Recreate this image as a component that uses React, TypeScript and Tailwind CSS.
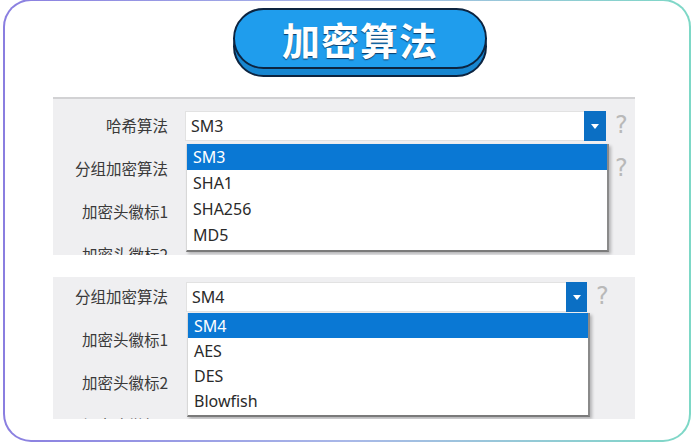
import React from "react";

const cjk = { fontFamily: '"Noto Sans CJK SC", "Noto Sans", sans-serif' };
const latin = { fontFamily: '"Noto Sans", "Open Sans", sans-serif' };

function Caret() {
  return (
    <svg width="8" height="5" viewBox="0 0 8 5">
      <path d="M0 0 L8 0 L4 5 Z" fill="#ffffff" />
    </svg>
  );
}

function Help() {
  return (
    <span
      className="text-[24px] leading-none text-[#b9b9b9]"
      style={{ fontFamily: '"DejaVu Sans", sans-serif' }}
    >
      ?
    </span>
  );
}

function Label({ children }: { children: React.ReactNode }) {
  return (
    <div className="w-[115px] shrink-0 text-right text-[15.5px] text-[#3a3a3a] leading-none" style={cjk}>
      {children}
    </div>
  );
}

function DropList({
  items,
  widthClass,
  rowClass,
  topClass,
}: {
  items: string[];
  widthClass: string;
  rowClass: string;
  topClass: string;
}) {
  return (
    <div
      className={`absolute left-0 ${topClass} ${widthClass} z-10 bg-white border-l border-[#d8d8d8] border-r-2 border-b-2 border-r-[#8a8a8a] border-b-[#7a7a7a] pb-[2px] shadow-[2px_2px_3px_rgba(0,0,0,0.25)]`}
      style={latin}
    >
      {items.map((it, i) => (
        <div
          key={it}
          className={`${rowClass} flex items-center pl-[6px] text-[16px] ${
            i === 0 ? "bg-[#0a78d4] text-white" : "text-[#2a2a2a]"
          }`}
        >
          {it}
        </div>
      ))}
    </div>
  );
}

export default function App() {
  return (
    <div className="w-[696px] h-[446px] bg-white overflow-hidden">
      <div className="ml-[3px] -mt-[1px] w-[688px] h-[443px] rounded-[28px] p-[2px] bg-gradient-to-r from-[#8a7ee0] via-[#a9b8e8] to-[#7dd8c6]">
        <div className="w-full h-full rounded-[26px] bg-white flex flex-col">
          {/* Title pill */}
          <div className="relative ml-[228px] mt-[7px] w-[254px] h-[69px] shrink-0">
            <div className="absolute left-0 top-[8px] w-[254px] h-[61px] rounded-full bg-[#1786d0] border-[2.5px] border-[#0c2440]" />
            <div className="absolute left-0 top-0 w-[254px] h-[61px] rounded-full bg-[#1f9ded] border-[2.5px] border-[#0c2440] flex items-center justify-center">
              <span
                className="text-white text-[38px] font-bold tracking-[1px] leading-none [text-shadow:0_1px_1px_#0b3a66]"
                style={cjk}
              >
                加密算法
              </span>
            </div>
          </div>

          {/* Panel 1 */}
          <div className="ml-[48px] mt-[20px] w-[582px] h-[158px] shrink-0 bg-[#efeff1] border-t-2 border-[#d2d2d4] overflow-hidden pt-[12px] flex flex-col gap-[13px]">
            <div className="flex items-center h-[30px] shrink-0">
              <Label>哈希算法</Label>
              <div className="relative ml-[17px] w-[421px] h-[30px] bg-white border border-[#e2e2e2] flex items-center">
                <span className="pl-[5px] text-[16px] text-[#2a2a2a] flex-1" style={latin}>
                  SM3
                </span>
                <div className="w-[22px] h-[30px] bg-[#0b6fc4] flex items-center justify-center -mr-px">
                  <Caret />
                </div>
                <DropList
                  items={["SM3", "SHA1", "SHA256", "MD5"]}
                  widthClass="w-[423px]"
                  rowClass="h-[26px]"
                  topClass="top-[32px]"
                />
              </div>
              <div className="ml-[9px]">
                <Help />
              </div>
            </div>
            <div className="flex items-center h-[30px] shrink-0">
              <Label>分组加密算法</Label>
              <div className="ml-[17px] w-[421px] h-[30px]" />
              <div className="ml-[9px]">
                <Help />
              </div>
            </div>
            <div className="flex items-center h-[30px] shrink-0">
              <Label>加密头徽标1</Label>
            </div>
            <div className="flex items-center h-[30px] shrink-0">
              <Label>加密头徽标2</Label>
            </div>
          </div>

          {/* Panel 2 */}
          <div className="ml-[48px] mt-[22px] w-[582px] h-[142px] shrink-0 bg-[#efeff1] overflow-hidden pt-[5px] flex flex-col gap-[13px]">
            <div className="flex items-center h-[30px] shrink-0">
              <Label>分组加密算法</Label>
              <div className="relative ml-[18px] w-[401px] h-[30px] bg-white border border-[#e2e2e2] flex items-center">
                <span className="pl-[5px] text-[16px] text-[#2a2a2a] flex-1" style={latin}>
                  SM4
                </span>
                <div className="w-[21px] h-[30px] bg-[#0b6fc4] flex items-center justify-center -mr-px">
                  <Caret />
                </div>
                <DropList
                  items={["SM4", "AES", "DES", "Blowfish"]}
                  widthClass="w-[403px]"
                  rowClass="h-[25px]"
                  topClass="top-[30px]"
                />
              </div>
              <div className="ml-[9px]">
                <Help />
              </div>
            </div>
            <div className="flex items-center h-[30px] shrink-0">
              <Label>加密头徽标1</Label>
            </div>
            <div className="flex items-center h-[30px] shrink-0">
              <Label>加密头徽标2</Label>
            </div>
            <div className="flex items-center h-[30px] shrink-0">
              <Label>加密头徽标3</Label>
            </div>
          </div>
        </div>
      </div>
    </div>
  );
}
